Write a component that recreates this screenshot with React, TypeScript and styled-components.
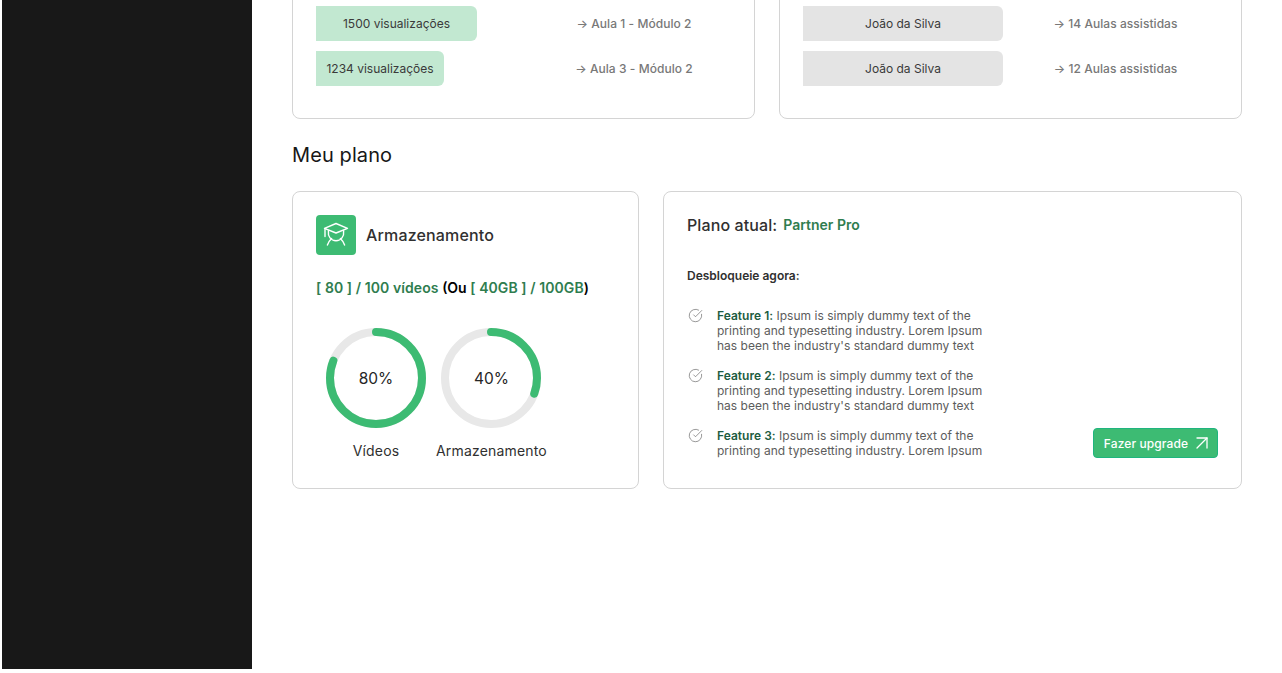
import React from 'react'
import styled, { createGlobalStyle } from 'styled-components'
import { ArrowUpRight, CircleCheckBig } from 'lucide-react'

const GlobalStyle = createGlobalStyle`
  html, body {
    margin: 0;
    height: 100%;
    overflow: hidden;
    background: #fff;
    font-family: Inter, "Noto Sans", sans-serif;
  }
`

const Page = styled.div`
  display: flex;
  align-items: flex-start;
  padding-left: 2px;
`

const Sidebar = styled.aside`
  flex: 0 0 250px;
  height: 669px;
  background: #181818;
`

const Main = styled.main`
  width: 950px;
  margin-top: -20px;
  padding-left: 40px;
`

const TopGrid = styled.div`
  display: grid;
  grid-template-columns: 463px 463px;
  gap: 24px;
`

const Card = styled.section`
  box-sizing: border-box;
  border: 1px solid #d4d4d4;
  border-radius: 8px;
  background: #fff;
`

const RankCard = styled(Card)`
  height: 139px;
  padding: 25px 23px 0;
  display: flex;
  flex-direction: column;
  gap: 10px;
`

const RankRow = styled.div<{ $labelWidth: number }>`
  display: grid;
  grid-template-columns: 1fr ${({ $labelWidth }) => $labelWidth}px;
  align-items: center;
  height: 35px;
`

const Bar = styled.div<{ $tone: 'green' | 'gray' }>`
  height: 35px;
  display: flex;
  align-items: center;
  justify-content: center;
  border-radius: 0 6px 6px 0;
  background: ${({ $tone }) => ($tone === 'green' ? '#c2e8d1' : '#e4e4e4')};
  color: #3a3a3a;
  font-size: 12px;
  white-space: nowrap;
`

const RankLabel = styled.div`
  text-align: center;
  color: #787878;
  font-size: 12px;
  font-weight: 500;
  letter-spacing: 0.05px;
  white-space: nowrap;
`

const SectionTitle = styled.h2`
  margin: 24px 0 24px;
  font-size: 20px;
  line-height: 24px;
  font-weight: 400;
  letter-spacing: 0.1px;
  color: #171717;
`

const PlanGrid = styled.div`
  display: grid;
  grid-template-columns: 347px 579px;
  gap: 24px;
`

const StorageCard = styled(Card)`
  height: 298px;
  padding: 23px;
`

const StorageHead = styled.div`
  display: flex;
  align-items: center;
  gap: 10px;
`

const IconTile = styled.div`
  width: 40px;
  height: 40px;
  display: flex;
  align-items: center;
  justify-content: center;
  border-radius: 4px;
  background: #3dbb73;
`

const StorageTitle = styled.h3`
  margin: 0;
  font-size: 16px;
  font-weight: 500;
  letter-spacing: 0.15px;
  color: #303030;
`

const Usage = styled.p`
  margin: 24px 0 0;
  font-size: 14px;
  line-height: 18px;
  font-weight: 600;
  color: #000;
  white-space: nowrap;
`

const Green = styled.span`
  font-weight: 600;
  letter-spacing: 0.08px;
  color: #2f7d4f;
`

const Rings = styled.div`
  display: flex;
  gap: 10px;
  margin-top: 31px;
  padding-left: 10px;
`

const RingColumn = styled.div`
  display: flex;
  flex-direction: column;
  align-items: center;
  gap: 14px;
`

const RingBox = styled.div`
  position: relative;
  width: 100px;
  height: 100px;
`

const RingValue = styled.span`
  position: absolute;
  inset: 0;
  display: flex;
  align-items: center;
  justify-content: center;
  font-size: 15.5px;
  color: #262626;
`

const RingLabel = styled.span`
  font-size: 14px;
  line-height: 18px;
  letter-spacing: 0.17px;
  color: #303030;
  white-space: nowrap;
`

const PlanCard = styled(Card)`
  height: 298px;
  padding: 23px;
  display: flex;
  flex-direction: column;
`

const CurrentPlan = styled.div`
  display: flex;
  align-items: center;
  gap: 6px;
  height: 20px;
`

const CurrentLabel = styled.span`
  font-size: 16px;
  font-weight: 500;
  letter-spacing: 0.1px;
  color: #303030;
`

const CurrentName = styled.span`
  margin-top: -1px;
  font-size: 14px;
  font-weight: 600;
  color: #2f7d4f;
`

const UnlockTitle = styled.h4`
  margin: 33px 0 0;
  font-size: 12px;
  line-height: 15px;
  font-weight: 600;
  color: #303030;
`

const Features = styled.ul`
  margin: 25px 0 0;
  padding: 0;
  list-style: none;
  display: flex;
  flex-direction: column;
  gap: 15px;
`

const Feature = styled.li`
  display: flex;
  align-items: flex-start;
  justify-content: space-between;
`

const FeatureBody = styled.div`
  display: flex;
  gap: 14px;
  padding-left: 1px;
`

const FeatureIcon = styled.span`
  display: flex;
  width: 15px;
  height: 15px;
  align-items: center;
  color: #6b6b6b;
`

const FeatureText = styled.p`
  margin: 0;
  width: 270px;
  font-size: 12px;
  line-height: 15px;
  letter-spacing: 0.02px;
  color: #5c5c5c;
`

const FeatureName = styled.strong`
  font-weight: 600;
  color: #1d5c41;
`

const UpgradeButton = styled.button`
  align-self: flex-end;
  box-sizing: border-box;
  width: 125px;
  height: 30px;
  display: flex;
  align-items: center;
  justify-content: center;
  gap: 9px;
  padding: 0;
  border: 1px solid #1fb57f;
  border-radius: 4px;
  background: #3dbb73;
  color: #fff;
  font-family: inherit;
  font-size: 12px;
  font-weight: 500;
  letter-spacing: 0.1px;
`

const UpgradeArrow = styled(ArrowUpRight)`
  margin: 0 -7px;
`

const GraduationIcon = () => (
  <svg width="26" height="26" viewBox="0 0 26 26" fill="none" stroke="#fff" strokeWidth="1.4" strokeLinecap="round" strokeLinejoin="round">
    <path d="M1.5 6.3 13 1.5l11.5 4.8L13 11z" />
    <path d="M2 6.5v8" />
    <path d="M5.4 8.8c-.8 5.6 2.6 9.9 7.6 9.9s8.4-4.3 7.6-9.9" />
    <path d="M8.6 16.6C6.8 18.3 5.3 20.6 4.4 23M17.4 16.6c1.8 1.7 3.3 4 4.2 6.4" />
  </svg>
)

const Ring = ({ percent, arc, label }: { percent: number; arc: number; label: string }) => {
  const circumference = 2 * Math.PI * 46
  return (
    <RingColumn>
      <RingBox>
        <svg width="100" height="100" viewBox="0 0 100 100">
          <circle cx="50" cy="50" r="46" fill="none" stroke="#e8e8e8" strokeWidth="8" />
          <circle
            cx="50"
            cy="50"
            r="46"
            fill="none"
            stroke="#3dbb73"
            strokeWidth="8"
            strokeLinecap="round"
            strokeDasharray={`${(circumference * arc) / 100} ${circumference}`}
            transform="rotate(-90 50 50)"
          />
        </svg>
        <RingValue>{percent}%</RingValue>
      </RingBox>
      <RingLabel>{label}</RingLabel>
    </RingColumn>
  )
}

const views = [
  { text: '1500 visualizações', width: 161, lesson: '→ Aula 1 - Módulo 2' },
  { text: '1234 visualizações', width: 128, lesson: '→ Aula 3 - Módulo 2' },
]

const students = [
  { name: 'João da Silva', lessons: '→ 14 Aulas assistidas' },
  { name: 'João da Silva', lessons: '→ 12 Aulas assistidas' },
]

const features = [
  {
    name: 'Feature 1:',
    text: "Ipsum is simply dummy text of the printing and typesetting industry. Lorem Ipsum has been the industry's standard dummy text",
  },
  {
    name: 'Feature 2:',
    text: "Ipsum is simply dummy text of the printing and typesetting industry. Lorem Ipsum has been the industry's standard dummy text",
  },
  {
    name: 'Feature 3:',
    text: 'Ipsum is simply dummy text of the printing and typesetting industry. Lorem Ipsum',
  },
]

const App = () => (
  <>
    <GlobalStyle />
    <Page>
      <Sidebar />
      <Main>
        <TopGrid>
          <RankCard>
            {views.map((item) => (
              <RankRow key={item.text} $labelWidth={194}>
                <Bar $tone="green" style={{ width: item.width }}>
                  {item.text}
                </Bar>
                <RankLabel>{item.lesson}</RankLabel>
              </RankRow>
            ))}
          </RankCard>
          <RankCard>
            {students.map((item) => (
              <RankRow key={item.lessons} $labelWidth={205}>
                <Bar $tone="gray" style={{ width: 200 }}>
                  {item.name}
                </Bar>
                <RankLabel>{item.lessons}</RankLabel>
              </RankRow>
            ))}
          </RankCard>
        </TopGrid>

        <SectionTitle>Meu plano</SectionTitle>

        <PlanGrid>
          <StorageCard>
            <StorageHead>
              <IconTile>
                <GraduationIcon />
              </IconTile>
              <StorageTitle>Armazenamento</StorageTitle>
            </StorageHead>
            <Usage>
              <Green>[ 80 ] / 100 vídeos</Green> (Ou <Green>[ 40GB ] / 100GB</Green>)
            </Usage>
            <Rings>
              <Ring percent={80} arc={81} label="Vídeos" />
              <Ring percent={40} arc={30.5} label="Armazenamento" />
            </Rings>
          </StorageCard>

          <PlanCard>
            <CurrentPlan>
              <CurrentLabel>Plano atual:</CurrentLabel>
              <CurrentName>Partner Pro</CurrentName>
            </CurrentPlan>
            <UnlockTitle>Desbloqueie agora:</UnlockTitle>
            <Features>
              {features.map((item, index) => (
                <Feature key={item.name}>
                  <FeatureBody>
                    <FeatureIcon>
                      <CircleCheckBig size={15} strokeWidth={1.1} />
                    </FeatureIcon>
                    <FeatureText>
                      <FeatureName>{item.name}</FeatureName> {item.text}
                    </FeatureText>
                  </FeatureBody>
                  {index === features.length - 1 && (
                    <UpgradeButton>
                      Fazer upgrade
                      <UpgradeArrow size={24} strokeWidth={1.3} />
                    </UpgradeButton>
                  )}
                </Feature>
              ))}
            </Features>
          </PlanCard>
        </PlanGrid>
      </Main>
    </Page>
  </>
)

export default App
